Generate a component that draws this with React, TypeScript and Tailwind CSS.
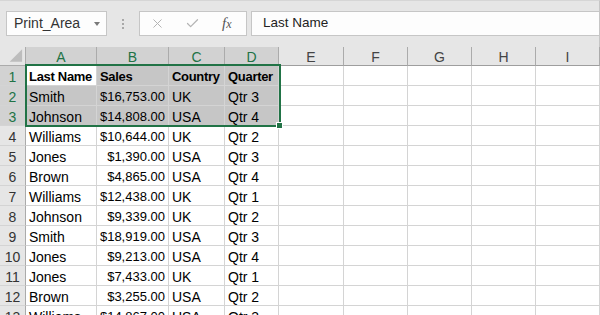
import { X, Check } from 'lucide-react'

const columns = ['A', 'B', 'C', 'D', 'E', 'F', 'G', 'H', 'I']

const rows = [
  ['Last Name', 'Sales', 'Country', 'Quarter'],
  ['Smith', '$16,753.00', 'UK', 'Qtr 3'],
  ['Johnson', '$14,808.00', 'USA', 'Qtr 4'],
  ['Williams', '$10,644.00', 'UK', 'Qtr 2'],
  ['Jones', '$1,390.00', 'USA', 'Qtr 3'],
  ['Brown', '$4,865.00', 'USA', 'Qtr 4'],
  ['Williams', '$12,438.00', 'UK', 'Qtr 1'],
  ['Johnson', '$9,339.00', 'UK', 'Qtr 2'],
  ['Smith', '$18,919.00', 'USA', 'Qtr 3'],
  ['Jones', '$9,213.00', 'USA', 'Qtr 4'],
  ['Jones', '$7,433.00', 'UK', 'Qtr 1'],
  ['Brown', '$3,255.00', 'USA', 'Qtr 2'],
  ['Williams', '$14,867.00', 'USA', 'Qtr 3'],
]

function Toolbar() {
  return (
    <div className="h-[47px] bg-[#e6e6e6] border-t border-[#d6d6d6] border-r border-r-[#c6c6c6] flex items-start pt-[10px] pl-[6px]">
      {/* name box */}
      <div className="w-[101px] h-[25px] bg-[#fdfdfd] border border-[#c6c6c6] flex items-center pl-[7px] pr-[6px] text-[14px] text-[#333]">
        <span className="flex-1">Print_Area</span>
        <span className="w-0 h-0 border-l-[3.5px] border-r-[3.5px] border-t-[4px] border-l-transparent border-r-transparent border-t-[#7a7a7a]" />
      </div>
      {/* grip dots */}
      <div className="w-[32px] h-[25px] flex flex-col items-center justify-center gap-[2px]">
        <span className="w-[2px] h-[2px] bg-[#a8a8a8]" />
        <span className="w-[2px] h-[2px] bg-[#a8a8a8]" />
        <span className="w-[2px] h-[2px] bg-[#a8a8a8]" />
      </div>
      {/* cancel / enter / fx */}
      <div className="w-[108px] h-[25px] bg-[#fdfdfd] border border-[#c6c6c6] flex items-center">
        <X className="ml-[10px] w-[15px] h-[15px] text-[#b4b4b4]" strokeWidth={1.6} />
        <Check className="ml-[20px] w-[15px] h-[15px] text-[#b4b4b4]" strokeWidth={2} />
        <span className="ml-[22px] font-['Liberation_Serif',serif] italic text-[15px] text-[#555] leading-none">
          f<span className="text-[12px]">x</span>
        </span>
      </div>
      {/* formula bar */}
      <div className="ml-[4px] flex-1 h-[25px] bg-[#fdfdfd] border border-[#c6c6c6] border-r-0 flex items-center pl-[11px] text-[13.5px] text-[#222]">
        Last Name
      </div>
    </div>
  )
}

function Sheet() {
  return (
    <div className="relative grid grid-cols-[26px_71px_72px_56px_54px_65px_64px_64px_64px_64px]">
      {/* column headers */}
      <div className="h-[19px] bg-[#e6e6e6] border-r border-b border-[#ababab] flex items-end justify-end">
        <svg width="26" height="19" viewBox="0 0 26 19" className="block">
          <polygon points="10,16 23,3 23,16" fill="#bdbdbd" />
        </svg>
      </div>
      {columns.map((c, i) => (
        <div
          key={c}
          className={`h-[19px] border-r border-b border-r-[#ababab] border-b-[#9e9e9e] text-center text-[14px] leading-[16px] pt-[2px] ${i < 4 ? 'bg-[#d2d2d2] text-[#217346]' : 'bg-[#e6e6e6] text-[#444]'}`}
        >
          {c}
        </div>
      ))}

      {/* rows */}
      {rows.map((r, ri) => (
        <div key={ri} className="contents">
          <div
            className={`h-[20px] border-r border-b border-r-[#ababab] border-b-[#d4d4d4] text-center text-[14px] leading-[16px] pt-[3px] ${ri < 3 ? 'bg-[#d2d2d2] text-[#217346]' : 'bg-[#e6e6e6] text-[#333]'}`}
          >
            {ri + 1}
          </div>
          {columns.map((c, ci) => {
            const v = r[ci] ?? ''
            const selected = ri < 3 && ci < 4 && !(ri === 0 && ci === 0)
            const isNumber = ci === 1 && ri > 0
            const size = ri === 0 ? 'text-[13px] font-bold tracking-[-0.3px]' : isNumber ? 'text-[13px]' : 'text-[14px]'
            return (
              <div
                key={c}
                className={`h-[20px] border-r border-b border-[#d4d4d4] whitespace-nowrap overflow-hidden leading-[16px] pt-[3px] text-black ${size} ${isNumber ? 'text-right pr-[3px]' : 'pl-[3px]'} ${selected ? 'bg-[#c6c6c6]' : 'bg-white'}`}
              >
                {v}
              </div>
            )
          })}
        </div>
      ))}

      {/* selection A1:D3 */}
      <div className="absolute left-[25px] top-[17px] w-[256px] h-[63px] border-2 border-[#217346] pointer-events-none" />
      <div className="absolute left-[276px] top-[75px] w-[7px] h-[7px] bg-[#217346] border border-white" />
    </div>
  )
}

export default function App() {
  return (
    <div className="w-[600px] h-[315px] overflow-hidden bg-white font-['Liberation_Sans',Arial,sans-serif]">
      <Toolbar />
      <Sheet />
    </div>
  )
}
